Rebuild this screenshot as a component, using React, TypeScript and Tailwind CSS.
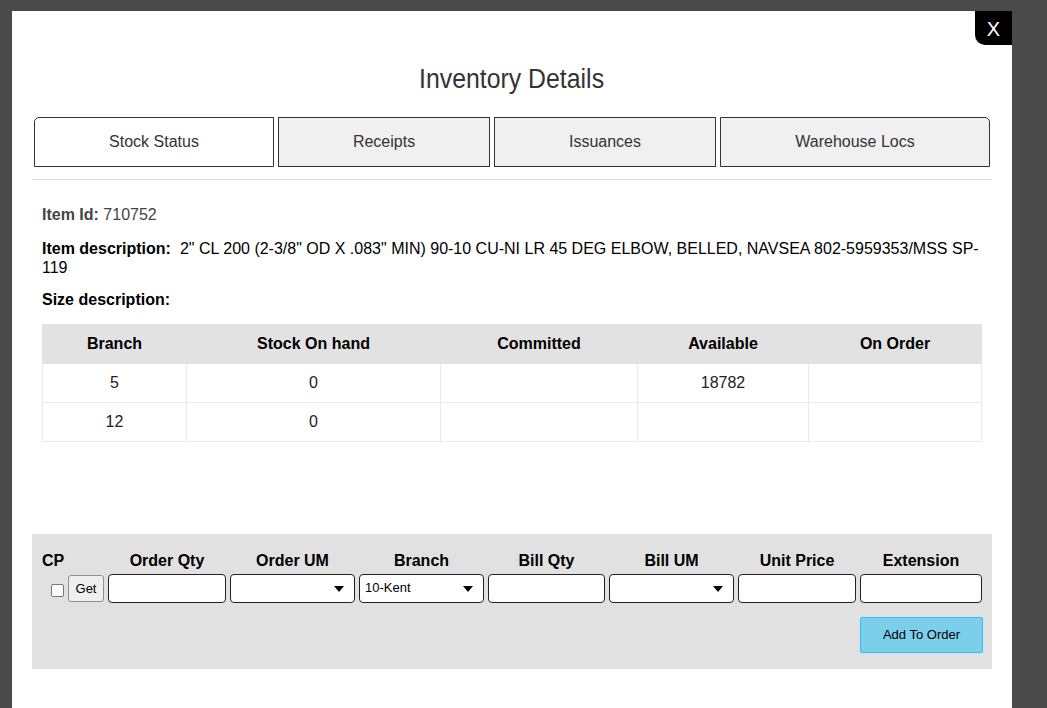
import React from 'react'

const font = { fontFamily: '"Liberation Sans", Arial, sans-serif' }

const tabs = [
  { label: 'Stock Status', w: 'w-[240px]', active: true, cls: 'rounded-tl-[5px]' },
  { label: 'Receipts', w: 'w-[212px]', active: false, cls: '' },
  { label: 'Issuances', w: 'w-[222px]', active: false, cls: '' },
  { label: 'Warehouse Locs', w: 'w-[270px]', active: false, cls: 'rounded-tr-[5px]' },
]

const stock = [
  { branch: '5', onHand: '0', committed: '', available: '18782', onOrder: '' },
  { branch: '12', onHand: '0', committed: '', available: '', onOrder: '' },
]

function Caret() {
  return (
    <svg width="10" height="6" viewBox="0 0 10 6" className="shrink-0">
      <path d="M0 0 L10 0 L5 6 Z" fill="#000" />
    </svg>
  )
}

function Field({ w }: { w: string }) {
  return <div className={`${w} h-[29px] bg-white border border-[#222] rounded-[4px]`} />
}

function Select({ w, value }: { w: string; value?: string }) {
  return (
    <div className={`${w} h-[29px] bg-white border border-[#222] rounded-[4px] flex items-center justify-between pl-[5px] pr-[10px] text-[13px] text-black`}>
      <span className="-mt-[2px]">{value ?? ''}</span>
      <Caret />
    </div>
  )
}

export default function App() {
  return (
    <div className="h-[708px] w-[1047px] bg-[#4a4a4a] overflow-hidden pt-[11px] pl-[12px]" style={font}>
      <div className="relative w-[1000px] h-[720px] bg-white px-[20px]">
        <button className="absolute top-0 right-0 w-[37px] h-[34px] bg-black text-white text-[20px] rounded-bl-[10px] flex items-center justify-center pt-[1px]">
          X
        </button>

        <div className="pt-[52px] flex justify-center">
          <h1 className="inline-block scale-x-[0.92] text-[27px] leading-[32px] text-[#333]">Inventory Details</h1>
        </div>

        <div className="mt-[22px] flex gap-[4px] pl-[2px]">
          {tabs.map((t) => (
            <div
              key={t.label}
              className={`${t.w} ${t.cls} h-[50px] border border-[#333] flex items-center justify-center text-[16px] text-[#333] ${
                t.active ? 'bg-white' : 'bg-[#f0f0f0]'
              }`}
            >
              {t.label}
            </div>
          ))}
        </div>

        <div className="mt-[12px] border-t border-[#dedede]" />

        <div className="px-[10px]">
          <p className="mt-[25px] text-[16px] leading-[19px] text-[#444]">
            <span className="font-bold">Item Id:</span> <span>710752</span>
          </p>
          <p className="mt-[15px] text-[16px] leading-[19px] text-black">
            <span className="font-bold mr-[9px]">Item description:</span>
            <span>2" CL 200 (2-3/8" OD X .083" MIN) 90-10 CU-NI LR 45 DEG ELBOW, BELLED, NAVSEA 802-5959353/MSS SP-119</span>
          </p>
          <p className="mt-[13px] text-[16px] leading-[19px] text-black font-bold">Size description:</p>

          <table className="mt-[15px] w-[939px] border-collapse text-[16px] text-center table-fixed">
            <colgroup>
              <col className="w-[144px]" />
              <col className="w-[254px]" />
              <col className="w-[197px]" />
              <col className="w-[171px]" />
              <col className="w-[173px]" />
            </colgroup>
            <thead>
              <tr className="bg-[#e2e2e2] h-[39px]">
                {['Branch', 'Stock On hand', 'Committed', 'Available', 'On Order'].map((h) => (
                  <th key={h} className="font-bold text-black border border-[#e2e2e2]">
                    {h}
                  </th>
                ))}
              </tr>
            </thead>
            <tbody>
              {stock.map((r) => (
                <tr key={r.branch} className="h-[39px] text-[#222]">
                  <td className="border border-[#eaeaea]">{r.branch}</td>
                  <td className="border border-[#eaeaea]">{r.onHand}</td>
                  <td className="border border-[#eaeaea]">{r.committed}</td>
                  <td className="border border-[#eaeaea]">{r.available}</td>
                  <td className="border border-[#eaeaea]">{r.onOrder}</td>
                </tr>
              ))}
            </tbody>
          </table>
        </div>

        <div className="mt-[92px] bg-[#e1e1e1] pl-[10px] pr-[9px] pt-[18px] pb-[16px]">
          <div className="flex gap-[4px] text-[16px] font-bold text-black leading-[18px]">
            <div className="w-[62px]">CP</div>
            <div className="w-[118px] text-center">Order Qty</div>
            <div className="w-[125px] text-center">Order UM</div>
            <div className="w-[125px] text-center">Branch</div>
            <div className="w-[117px] text-center">Bill Qty</div>
            <div className="w-[125px] text-center">Bill UM</div>
            <div className="w-[118px] text-center">Unit Price</div>
            <div className="w-[122px] text-center">Extension</div>
          </div>
          <div className="mt-[4px] flex gap-[4px] items-center">
            <div className="w-[62px] flex items-center">
              <span className="ml-[9px] mt-[3px] w-[13px] h-[13px] bg-white border border-[#767676] rounded-[2px]" />
              <button className="ml-[4px] w-[36px] h-[27px] bg-[#efefef] border border-[#8f8f8f] rounded-[3px] text-[13px] text-black">
                Get
              </button>
            </div>
            <Field w="w-[118px]" />
            <Select w="w-[125px]" />
            <Select w="w-[125px]" value="10-Kent" />
            <Field w="w-[117px]" />
            <Select w="w-[125px]" />
            <Field w="w-[118px]" />
            <Field w="w-[122px]" />
          </div>
          <div className="mt-[14px] flex justify-end">
            <button className="w-[123px] h-[36px] bg-[#7ccfea] border border-[#2fc0f3] rounded-[2px] text-[13px] text-black">
              Add To Order
            </button>
          </div>
        </div>
      </div>
    </div>
  )
}
